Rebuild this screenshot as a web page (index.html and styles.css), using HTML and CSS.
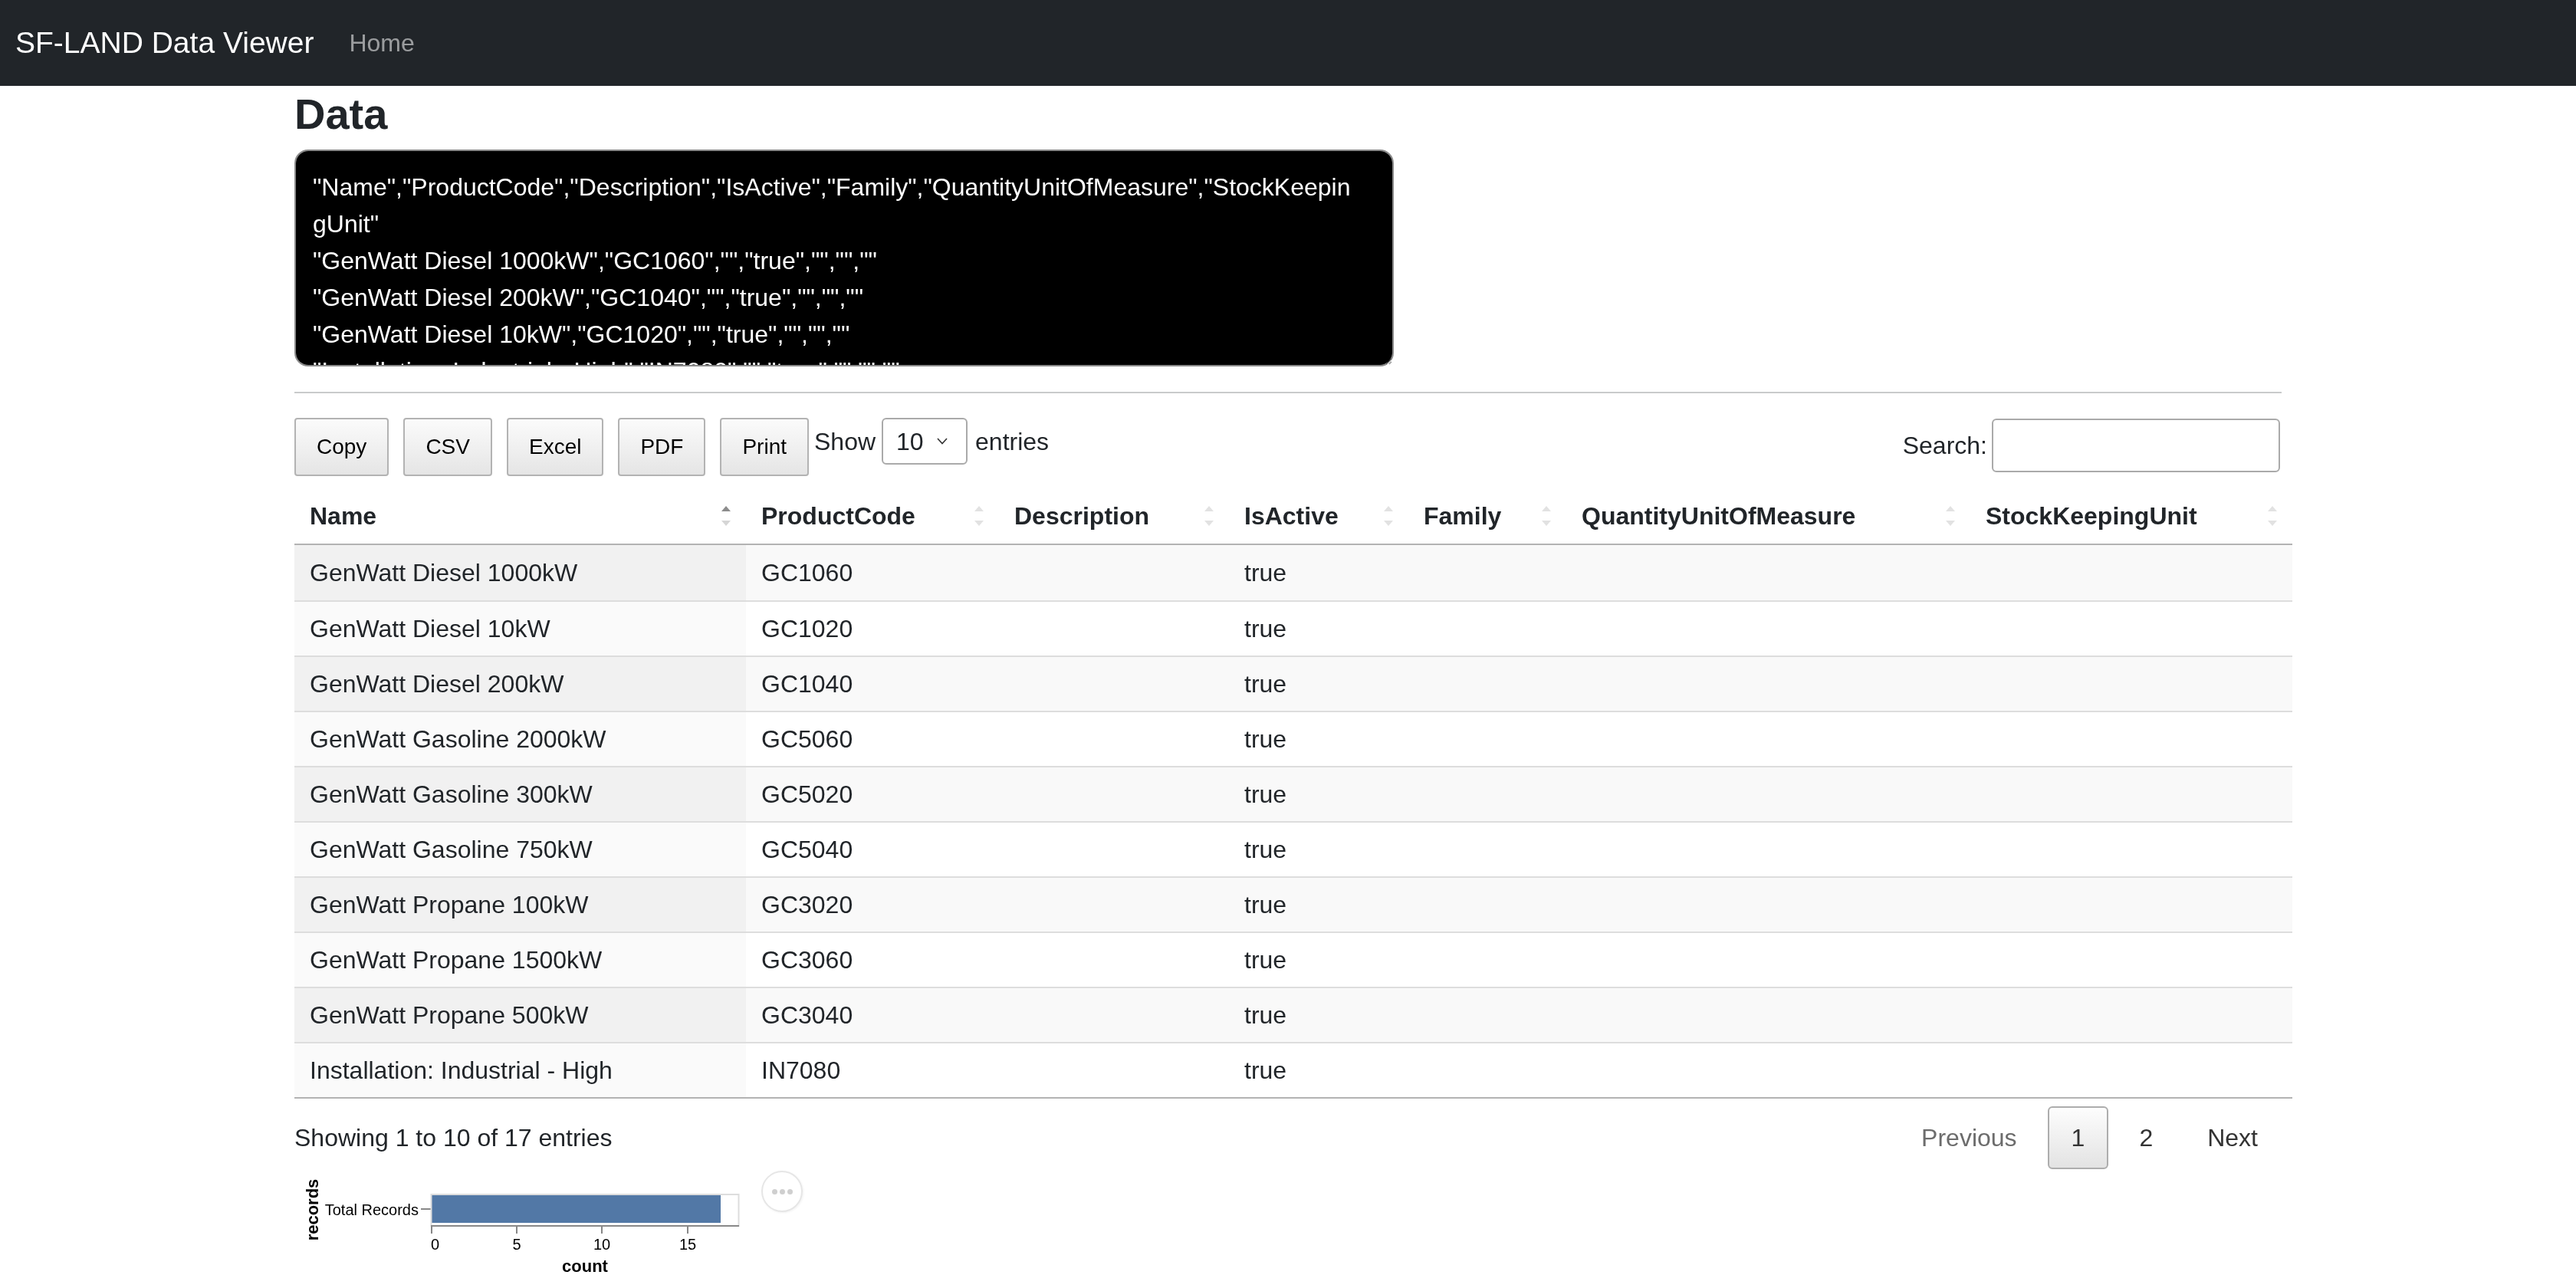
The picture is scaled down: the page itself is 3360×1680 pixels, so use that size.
FILE: index.html
```html
<!DOCTYPE html>
<html lang="en">
<head>
<meta charset="utf-8">
<title>SF-LAND Data Viewer</title>
<link rel="stylesheet" href="styles.css">
</head>
<body>
<nav class="navbar">
  <span class="brand">SF-LAND Data Viewer</span>
  <a class="nav-link" href="#">Home</a>
</nav>
<main class="container">
  <h3 class="title">Data</h3>
  <textarea class="csv" spellcheck="false">"Name","ProductCode","Description","IsActive","Family","QuantityUnitOfMeasure","StockKeepingUnit"
"GenWatt Diesel 1000kW","GC1060","","true","","",""
"GenWatt Diesel 200kW","GC1040","","true","","",""
"GenWatt Diesel 10kW","GC1020","","true","","",""
"Installation: Industrial - High","IN7080","","true","","",""
"Installation: Portable","IN7020","","true","","",""
"Installation: Industrial - Low","IN7060","","true","","",""
"Installation: Industrial - Medium","IN7040","","true","","",""
"SLA: Bronze","SL9020","","true","","",""
"SLA: Silver","SL9040","","true","","",""
"SLA: Platinum","SL9060","","true","","",""
"SLA: Gold","SL9080","","true","","",""
"GenWatt Propane 500kW","GC3040","","true","","",""
"GenWatt Propane 1500kW","GC3060","","true","","",""
"GenWatt Propane 100kW","GC3020","","true","","",""
"GenWatt Gasoline 300kW","GC5020","","true","","",""
"GenWatt Gasoline 750kW","GC5040","","true","","",""
"GenWatt Gasoline 2000kW","GC5060","","true","","",""</textarea>
  <hr class="rule">
  <div class="controls">
    <div class="controls-left">
      <button class="dt-btn">Copy</button>
      <button class="dt-btn">CSV</button>
      <button class="dt-btn">Excel</button>
      <button class="dt-btn">PDF</button>
      <button class="dt-btn last">Print</button>
      <label class="length">Show
        <span class="select">
          <select><option>10</option><option>25</option><option>50</option><option>100</option></select>
          <svg class="chev" width="14" height="9" viewBox="0 0 14 9"><polyline points="1,1 7,7.5 13,1" fill="none" stroke="#333" stroke-width="1.6"/></svg>
        </span>
        entries</label>
    </div>
    <label class="search">Search:<input type="search"></label>
  </div>

  <table class="data">
    <colgroup>
      <col style="width:589px"><col style="width:330px"><col style="width:300px"><col style="width:234px"><col style="width:206px"><col style="width:527px"><col style="width:420px">
    </colgroup>
    <thead>
      <tr>
        <th><div class="th"><span>Name</span><svg class="sort" width="12" height="26" viewBox="0 0 12 26"><polygon points="6,0 12,7 0,7" fill="#8c8c8c"/><polygon points="0,19 12,19 6,26" fill="#d6d6d6"/></svg></div></th>
        <th><div class="th"><span>ProductCode</span><svg class="sort" width="12" height="26" viewBox="0 0 12 26"><polygon points="6,0 12,7 0,7" fill="#e2e2e2"/><polygon points="0,19 12,19 6,26" fill="#e2e2e2"/></svg></div></th>
        <th><div class="th"><span>Description</span><svg class="sort" width="12" height="26" viewBox="0 0 12 26"><polygon points="6,0 12,7 0,7" fill="#e2e2e2"/><polygon points="0,19 12,19 6,26" fill="#e2e2e2"/></svg></div></th>
        <th><div class="th"><span>IsActive</span><svg class="sort" width="12" height="26" viewBox="0 0 12 26"><polygon points="6,0 12,7 0,7" fill="#e2e2e2"/><polygon points="0,19 12,19 6,26" fill="#e2e2e2"/></svg></div></th>
        <th><div class="th"><span>Family</span><svg class="sort" width="12" height="26" viewBox="0 0 12 26"><polygon points="6,0 12,7 0,7" fill="#e2e2e2"/><polygon points="0,19 12,19 6,26" fill="#e2e2e2"/></svg></div></th>
        <th><div class="th"><span>QuantityUnitOfMeasure</span><svg class="sort" width="12" height="26" viewBox="0 0 12 26"><polygon points="6,0 12,7 0,7" fill="#e2e2e2"/><polygon points="0,19 12,19 6,26" fill="#e2e2e2"/></svg></div></th>
        <th><div class="th"><span>StockKeepingUnit</span><svg class="sort" width="12" height="26" viewBox="0 0 12 26"><polygon points="6,0 12,7 0,7" fill="#e2e2e2"/><polygon points="0,19 12,19 6,26" fill="#e2e2e2"/></svg></div></th>
      </tr>
    </thead>
    <tbody>
      <tr><td class="sorted">GenWatt Diesel 1000kW</td><td>GC1060</td><td></td><td>true</td><td></td><td></td><td></td></tr>
      <tr><td class="sorted">GenWatt Diesel 10kW</td><td>GC1020</td><td></td><td>true</td><td></td><td></td><td></td></tr>
      <tr><td class="sorted">GenWatt Diesel 200kW</td><td>GC1040</td><td></td><td>true</td><td></td><td></td><td></td></tr>
      <tr><td class="sorted">GenWatt Gasoline 2000kW</td><td>GC5060</td><td></td><td>true</td><td></td><td></td><td></td></tr>
      <tr><td class="sorted">GenWatt Gasoline 300kW</td><td>GC5020</td><td></td><td>true</td><td></td><td></td><td></td></tr>
      <tr><td class="sorted">GenWatt Gasoline 750kW</td><td>GC5040</td><td></td><td>true</td><td></td><td></td><td></td></tr>
      <tr><td class="sorted">GenWatt Propane 100kW</td><td>GC3020</td><td></td><td>true</td><td></td><td></td><td></td></tr>
      <tr><td class="sorted">GenWatt Propane 1500kW</td><td>GC3060</td><td></td><td>true</td><td></td><td></td><td></td></tr>
      <tr><td class="sorted">GenWatt Propane 500kW</td><td>GC3040</td><td></td><td>true</td><td></td><td></td><td></td></tr>
      <tr><td class="sorted">Installation: Industrial - High</td><td>IN7080</td><td></td><td>true</td><td></td><td></td><td></td></tr>
    </tbody>
  </table>

  <div class="table-foot">
    <div class="info">Showing 1 to 10 of 17 entries</div>
    <div class="paging">
      <a class="page disabled">Previous</a>
      <a class="page current">1</a>
      <a class="page">2</a>
      <a class="page">Next</a>
    </div>
  </div>

  <div class="chart">
    <svg class="vega" width="600" height="140" viewBox="0 0 600 140">
      <text transform="translate(31,51) rotate(-90)" text-anchor="middle" class="axis-title">records</text>
      <text x="162" y="58" text-anchor="end" class="lbl">Total Records</text>
      <line x1="165" y1="50" x2="178" y2="50" stroke="#888" stroke-width="2"/>
      <rect x="178" y="32" width="378" height="36" fill="#5278a6"/>
      <rect x="178.5" y="31" width="401" height="41" fill="none" stroke="#ddd" stroke-width="2"/>
      <line x1="178" y1="72" x2="580" y2="72" stroke="#888" stroke-width="2"/>
      <line x1="179" y1="72" x2="179" y2="82" stroke="#888" stroke-width="2"/>
      <line x1="290" y1="72" x2="290" y2="82" stroke="#888" stroke-width="2"/>
      <line x1="401" y1="72" x2="401" y2="82" stroke="#888" stroke-width="2"/>
      <line x1="513" y1="72" x2="513" y2="82" stroke="#888" stroke-width="2"/>
      <text x="178" y="103" text-anchor="start" class="lbl">0</text>
      <text x="290" y="103" text-anchor="middle" class="lbl">5</text>
      <text x="401" y="103" text-anchor="middle" class="lbl">10</text>
      <text x="513" y="103" text-anchor="middle" class="lbl">15</text>
      <text x="379" y="132" text-anchor="middle" class="axis-title">count</text>
    </svg>
    <div class="actions"><span class="dot"></span><span class="dot"></span><span class="dot"></span></div>
  </div>
</main>
</body>
</html>
```
FILE: styles.css
```css
* { box-sizing: border-box; }
html, body { margin: 0; padding: 0; }
body {
  font-family: "Liberation Sans", Arial, sans-serif;
  font-size: 32px;
  line-height: 48px;
  color: #212529;
  background: #fff;
}

.navbar {
  height: 112px;
  background: #212529;
  display: flex;
  align-items: center;
  padding-left: 20px;
}
.brand {
  color: #fff;
  font-size: 39px;
  line-height: 1.5;
  margin-right: 30px;
}
.nav-link {
  color: rgba(255, 255, 255, 0.55);
  font-size: 32px;
  text-decoration: none;
  padding: 0 16px;
}

.container {
  width: 2592px;
  margin: 0 auto;
}
.title {
  font-size: 56px;
  line-height: 1.2;
  font-weight: 700;
  margin: 3px 0 13px;
  color: #212529;
}

.csv {
  display: block;
  width: 1434px;
  height: 283px;
  background: #000;
  color: #fff;
  border: 2px solid #8a8a8a;
  border-radius: 18px;
  padding: 23px 44px 12px 22px;
  font-family: "Liberation Sans", Arial, sans-serif;
  font-size: 32px;
  line-height: 48px;
  margin: 0;
  outline: none;
}

.rule {
  border: 0;
  border-top: 2px solid #c9cacb;
  margin: 33px 0 0;
  height: 0;
}

.controls {
  display: flex;
  justify-content: space-between;
  align-items: flex-start;
  margin-top: 32px;
}
.controls-left {
  display: flex;
  align-items: flex-start;
}
.dt-btn {
  height: 76px;
  padding: 0 27px;
  font-family: "Liberation Sans", Arial, sans-serif;
  font-size: 28px;
  line-height: 72px;
  color: #000;
  border: 2px solid #b3b3b3;
  border-radius: 4px;
  background: linear-gradient(to bottom, #fbfbfb 0%, #e5e5e5 100%);
  margin-right: 19px;
}
.dt-btn.last { margin-right: 7px; }

.length {
  display: flex;
  align-items: center;
  height: 61px;
  color: #212529;
}
.select {
  display: flex;
  align-items: center;
  width: 112px;
  height: 61px;
  margin: 0 10px 0 8px;
  border: 2px solid #aaa;
  border-radius: 6px;
  background: #fff;
  padding: 0 24px 0 17px;
}
.select select {
  appearance: none;
  -webkit-appearance: none;
  border: 0;
  background: transparent;
  font-family: "Liberation Sans", Arial, sans-serif;
  font-size: 32px;
  color: #212529;
  width: 100%;
  padding: 0;
  outline: none;
}
.chev { flex: none; }

.search {
  display: flex;
  align-items: center;
  height: 70px;
  margin-top: 1px;
  margin-right: 2px;
  color: #212529;
}
.search input {
  width: 376px;
  height: 70px;
  margin-left: 6px;
  border: 2px solid #aaa;
  border-radius: 6px;
  font-size: 32px;
  padding: 0 10px;
  outline: none;
}

.data {
  margin-top: 16px;
  width: 2606px;
  table-layout: fixed;
  border-collapse: separate;
  border-spacing: 0;
}
.data th {
  text-align: left;
  font-weight: 700;
  padding: 12px 20px;
  line-height: 48px;
  border-bottom: 2px solid #b3b3b3;
}
.th {
  display: flex;
  justify-content: space-between;
  align-items: center;
}
.sort { flex: none; }
.data td {
  padding: 11px 20px;
  line-height: 48px;
  height: 72px;
  border-top: 2px solid #dddddd;
  white-space: nowrap;
}
.data tbody tr:first-child td {
  border-top: 0;
  padding-top: 12px;
  padding-bottom: 12px;
  height: 72px;
}
.data tbody tr:last-child td {
  border-bottom: 2px solid #b3b3b3;
}
.data tbody tr:nth-child(odd) td { background: #f9f9f9; }
.data tbody tr:nth-child(odd) td.sorted { background: #f1f1f1; }
.data tbody tr:nth-child(even) td.sorted { background: #fafafa; }

.table-foot {
  display: flex;
  justify-content: space-between;
  align-items: center;
  height: 82px;
  margin-top: 10px;
}
.info { color: #212529; }
.paging {
  display: flex;
  align-items: center;
}
.page {
  display: block;
  padding: 16px 30px;
  line-height: 48px;
  border: 1px solid transparent;
  border-radius: 6px;
  margin-left: 9px;
  color: #333;
  cursor: pointer;
}
.page.disabled { color: #6c6c6c; }
.page.current {
  border: 2px solid #adadad;
  padding: 15px 29px;
  background: linear-gradient(to bottom, #fdfdfd 0%, #e3e3e3 100%);
}

.chart {
  display: flex;
  align-items: flex-start;
  gap: 9px;
  margin-top: 2px;
}
.vega { display: block; }
.vega .lbl {
  font-family: "Liberation Sans", Arial, sans-serif;
  font-size: 20px;
  fill: #000;
}
.vega .axis-title {
  font-family: "Liberation Sans", Arial, sans-serif;
  font-size: 22px;
  font-weight: 700;
  fill: #000;
}
.actions {
  width: 54px;
  height: 54px;
  border: 2px solid #e6e6e6;
  border-radius: 50%;
  background: #fff;
  box-shadow: 1px 1px 3px rgba(0, 0, 0, 0.06);
  display: flex;
  align-items: center;
  justify-content: center;
  gap: 3px;
}
.dot {
  width: 7px;
  height: 7px;
  border-radius: 50%;
  background: #cfcfcf;
}
```
